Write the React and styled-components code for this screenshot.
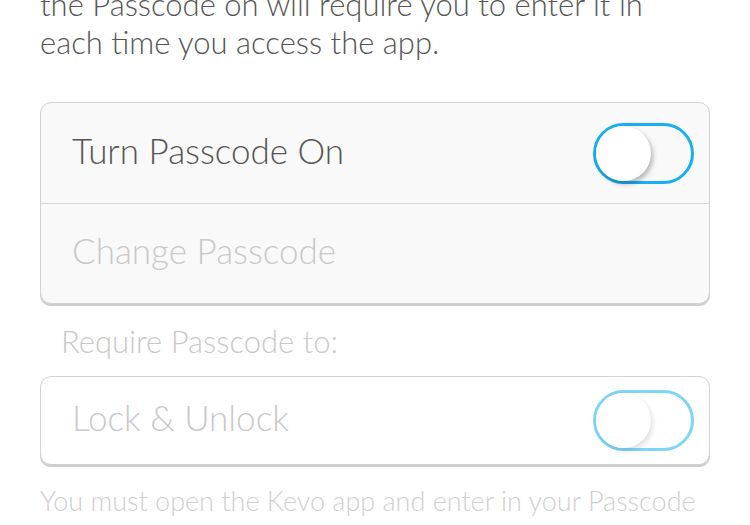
import React from "react";
import styled, { createGlobalStyle } from "styled-components";

const GlobalStyle = createGlobalStyle`
  html, body {
    margin: 0;
    padding: 0;
    background: #ffffff;
  }
  body {
    font-family: "Lato", "Open Sans", sans-serif;
    font-weight: 300;
    overflow: hidden;
  }
`;

const Page = styled.div`
  width: 750px;
  height: 525px;
  overflow: hidden;
  padding: 0 40px;
  box-sizing: border-box;
`;

const Intro = styled.p`
  margin: -15px 0 0;
  font-size: 31px;
  line-height: 38px;
  color: #555555;
  white-space: nowrap;
`;

const Card = styled.div`
  margin-top: ${(p) => p.$top}px;
  background: ${(p) => (p.$muted ? "#f9f9f9" : "#ffffff")};
  border: 1px solid #d2d2d2;
  border-radius: 11px;
  box-shadow: 0 2px 0 #cdcdcd;
  overflow: hidden;
`;

const Row = styled.div`
  height: ${(p) => p.$height}px;
  box-sizing: border-box;
  display: flex;
  align-items: center;
  justify-content: space-between;
  padding: 0 15px 0 31px;
  & + & {
    border-top: 1px solid #d6d6d6;
  }
`;

const Label = styled.span`
  font-size: 35px;
  margin-bottom: 7px;
  color: ${(p) => (p.$dim ? "#c9c9c9" : "#555555")};
`;

const Caption = styled.div`
  margin: 19px 0 0 21px;
  font-size: 31px;
  line-height: 36px;
  color: #c9c9c9;
`;

const Footnote = styled.div`
  margin-top: 19px;
  font-size: 27px;
  line-height: 34px;
  color: #cfcfcf;
  white-space: nowrap;
`;

const Track = styled.div`
  position: relative;
  flex: none;
  width: 101px;
  height: 61px;
  box-sizing: border-box;
  border: 3px solid ${(p) => (p.$faded ? "#7fd5f6" : "#16aff0")};
  border-radius: 31px;
`;

const Knob = styled.div`
  position: absolute;
  left: 0;
  top: 0;
  width: 55px;
  height: 55px;
  border-radius: 50%;
  background: #ffffff;
  box-shadow: ${(p) =>
    p.$faded
      ? "2px 3px 5px rgba(0, 0, 0, 0.12)"
      : "2px 3px 5px rgba(0, 0, 0, 0.28)"};
`;

function Toggle({ faded }) {
  return (
    <Track $faded={faded}>
      <Knob $faded={faded} />
    </Track>
  );
}

export default function App() {
  return (
    <>
      <GlobalStyle />
      <Page>
        <Intro>
          the Passcode on will require you to enter it in
          <br />
          each time you access the app.
        </Intro>
        <Card $muted $top={41}>
          <Row $height={100}>
            <Label>Turn Passcode On</Label>
            <Toggle />
          </Row>
          <Row $height={100}>
            <Label $dim>Change Passcode</Label>
          </Row>
        </Card>
        <Caption>Require Passcode to:</Caption>
        <Card $top={17}>
          <Row $height={87}>
            <Label $dim>Lock &amp; Unlock</Label>
            <Toggle faded />
          </Row>
        </Card>
        <Footnote>You must open the Kevo app and enter in your Passcode</Footnote>
      </Page>
    </>
  );
}
